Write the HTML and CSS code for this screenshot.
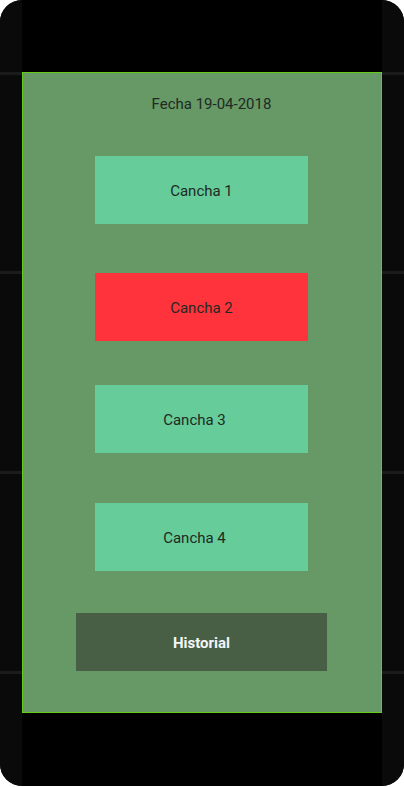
FILE: index.html
```html
<!DOCTYPE html>
<html lang="es">
<head>
<meta charset="utf-8">
<title>Canchas</title>
<link rel="stylesheet" href="styles.css">
</head>
<body>
<div class="device">
  <div class="side"></div>
  <div class="screen">
    <div class="topbar"></div>
    <main class="panel">
      <div class="fecha">Fecha 19-04-2018</div>
      <div class="cancha cancha-1 libre">Cancha 1</div>
      <div class="cancha cancha-2 ocupada">Cancha 2</div>
      <div class="cancha cancha-3 libre shifted">Cancha 3</div>
      <div class="cancha cancha-4 libre shifted">Cancha 4</div>
      <div class="historial">Historial</div>
    </main>
  </div>
  <div class="side"></div>
</div>
</body>
</html>
```
FILE: styles.css
```css
html, body {
  margin: 0;
  padding: 0;
  background: #ffffff;
}
body {
  font-family: Roboto, "Liberation Sans", sans-serif;
  width: 404px;
  height: 787px;
  overflow: hidden;
}
.device {
  display: flex;
  width: 404px;
  height: 786px;
  border-radius: 22px;
  overflow: hidden;
  background: #0a0a0a;
}
.side {
  width: 22px;
  flex: none;
  background:
    linear-gradient(#1b1b1b, #1b1b1b) 0 72px / 100% 3px no-repeat,
    linear-gradient(#1b1b1b, #1b1b1b) 0 271px / 100% 3px no-repeat,
    linear-gradient(#1b1b1b, #1b1b1b) 0 471px / 100% 3px no-repeat,
    linear-gradient(#1b1b1b, #1b1b1b) 0 671px / 100% 3px no-repeat,
    #0a0a0a;
}
.screen {
  flex: 1;
  background: #000;
  display: flex;
  flex-direction: column;
}
.topbar {
  height: 72px;
  flex: none;
}
.panel {
  height: 641px;
  box-sizing: border-box;
  border: 1px solid #66cc1a;
  background: #669966;
  display: flex;
  flex-direction: column;
  align-items: flex-start;
}
.fecha {
  margin-top: 21px;
  align-self: stretch;
  padding-left: 19px;
  text-align: center;
  height: 20px;
  line-height: 20px;
  font-size: 15px;
  color: #1f2a22;
}
.cancha {
  margin-left: 72px;
  width: 213px;
  height: 68px;
  padding-top: 2px;
  display: flex;
  align-items: center;
  justify-content: center;
  font-size: 15px;
  color: #1e2a24;
  box-sizing: border-box;
}
.libre { background: #66cc99; }
.ocupada { background: #ff333b; }
.shifted { padding-right: 14px; }
.cancha-1 { margin-top: 42px; }
.cancha-2 { margin-top: 49px; }
.cancha-3 { margin-top: 44px; }
.cancha-4 { margin-top: 50px; }
.historial {
  margin-top: 42px;
  margin-left: 53px;
  width: 251px;
  height: 58px;
  padding-top: 2px;
  box-sizing: border-box;
  background: #485e45;
  display: flex;
  align-items: center;
  justify-content: center;
  font-size: 15px;
  font-weight: bold;
  color: #f2f6fa;
}
```
